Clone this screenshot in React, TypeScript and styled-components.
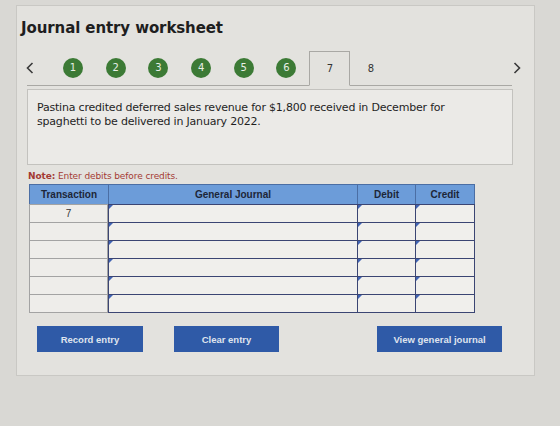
import styled, { createGlobalStyle } from "styled-components";

const GlobalStyle = createGlobalStyle`
  body {
    margin: 0;
    background: #d9d8d4;
    font-family: "DejaVu Sans", Verdana, sans-serif;
  }
`;

const STEPS = [1, 2, 3, 4, 5, 6];
const ROWS = 6;

const App = () => {
  return (
    <Page>
      <GlobalStyle />
      <Panel>
        <Title>Journal entry worksheet</Title>
        <NavRow>
          <StepStrip>
            <Arrow>
              <Chevron dir="left" />
            </Arrow>
            <Steps>
              {STEPS.map((n) => (
                <StepDot key={n}>{n}</StepDot>
              ))}
            </Steps>
            <Tab $active>7</Tab>
            <Tab>8</Tab>
          </StepStrip>
          <Arrow $next>
            <Chevron dir="right" />
          </Arrow>
        </NavRow>

        <Question>
          Pastina credited deferred sales revenue for $1,800 received in December for
          <br />
          spaghetti to be delivered in January 2022.
        </Question>

        <Note>
          <b>Note:</b> Enter debits before credits.
        </Note>

        <Grid>
          <HeadCell>Transaction</HeadCell>
          <HeadCell>General Journal</HeadCell>
          <HeadCell>Debit</HeadCell>
          <HeadCell>Credit</HeadCell>
          {Array.from({ length: ROWS }).map((_, i) => (
            <RowGroup key={i}>
              <TxCell>{i === 0 ? "7" : ""}</TxCell>
              <EntryCell />
              <EntryCell />
              <EntryCell />
            </RowGroup>
          ))}
        </Grid>

        <Buttons>
          <Btn $w={106}>Record entry</Btn>
          <Btn $w={105}>Clear entry</Btn>
          <Spacer />
          <Btn $w={125}>View general journal</Btn>
        </Buttons>
      </Panel>
    </Page>
  );
};

const Chevron = ({ dir }: { dir: "left" | "right" }) => (
  <svg width="8" height="12" viewBox="0 0 8 12">
    <path
      d={dir === "left" ? "M6.5 1 L1.5 6 L6.5 11" : "M1.5 1 L6.5 6 L1.5 11"}
      fill="none"
      stroke="#3a3a3a"
      strokeWidth="1.6"
    />
  </svg>
);

// page and outer frame
const Page = styled.div`
  padding: 5px 0 0 16px;
  height: 421px;
  box-sizing: border-box;
`;

const Panel = styled.div`
  width: 519px;
  height: 371px;
  box-sizing: border-box;
  border: 1px solid #c9c8c4;
  background: #e3e2de;
  padding: 0 0 0 10px;
`;

const Title = styled.h1`
  margin: 13px 0 0 -6px;
  font-size: 15px;
  font-weight: bold;
  color: #1e1e1e;
  letter-spacing: -0.1px;
`;

// step navigation
const NavRow = styled.div`
  display: flex;
  align-items: center;
  margin-top: 13px;
  width: 494px;
`;

const StepStrip = styled.div`
  display: flex;
  align-items: flex-end;
  width: 485px;
  height: 35px;
  border-bottom: 1px solid #a9a8a4;
`;

const Arrow = styled.div<{ $next?: boolean }>`
  display: flex;
  align-items: center;
  justify-content: center;
  width: 9px;
  height: 35px;
  margin-left: ${(p) => (p.$next ? "0" : "-2px")};
  margin-right: ${(p) => (p.$next ? "0" : "3px")};
`;

const Steps = styled.div`
  display: flex;
  align-items: center;
  gap: 22.7px;
  height: 35px;
  margin-left: 26px;
  margin-right: 13px;
`;

const StepDot = styled.div`
  width: 20px;
  height: 20px;
  border-radius: 50%;
  background: #3c7a35;
  color: #e8efe6;
  font-size: 10px;
  display: flex;
  align-items: center;
  justify-content: center;
`;

const Tab = styled.div<{ $active?: boolean }>`
  width: 41px;
  height: 35px;
  box-sizing: border-box;
  display: flex;
  align-items: center;
  justify-content: center;
  font-size: 10px;
  color: #333;
  margin-bottom: -1px;
  border: 1px solid ${(p) => (p.$active ? "#a9a8a4" : "transparent")};
  border-bottom: 1px solid ${(p) => (p.$active ? "#e3e2de" : "transparent")};
`;

// question box
const Question = styled.div`
  width: 486px;
  height: 76px;
  box-sizing: border-box;
  margin-top: 3px;
  border: 1px solid #c3c2be;
  background: #ebeae7;
  padding: 11px 9px;
  font-size: 11px;
  line-height: 14px;
  color: #1f1f1f;
  letter-spacing: -0.2px;
`;

const Note = styled.div`
  margin: 6px 0 0 1px;
  font-size: 9px;
  color: #a33a34;
  letter-spacing: -0.1px;

  b {
    font-weight: bold;
  }
`;

// journal grid
const Grid = styled.div`
  display: grid;
  grid-template-columns: 79px 249px 58px 59px;
  grid-auto-rows: 18px;
  grid-template-rows: 20px;
  margin: 3px 0 0 2px;
  width: 445px;
`;

const RowGroup = styled.div`
  display: contents;
`;

const HeadCell = styled.div`
  background: #6c9cd9;
  border: 1px solid #4b6ea4;
  margin: 0 -1px -1px 0;
  font-family: "Liberation Sans", Arial, sans-serif;
  font-size: 10px;
  font-weight: bold;
  color: #1d2638;
  display: flex;
  align-items: center;
  justify-content: center;
`;

const TxCell = styled.div`
  background: #eeedea;
  border: 1px solid #a3a3a3;
  margin: 0 0 -1px 0;
  font-family: "Liberation Sans", Arial, sans-serif;
  font-size: 10px;
  color: #333;
  display: flex;
  align-items: center;
  justify-content: center;
`;

const EntryCell = styled.div`
  position: relative;
  background: #f0efec;
  border: 1px solid #3b4573;
  margin: 0 -1px -1px 0;

  &::before {
    content: "";
    position: absolute;
    top: 0;
    left: 0;
    border-top: 4px solid #3f63b3;
    border-right: 4px solid transparent;
  }
`;

// action buttons
const Buttons = styled.div`
  display: flex;
  align-items: center;
  margin: 14px 0 0 10px;
  width: 465px;
  gap: 31px;
`;

const Spacer = styled.div`
  flex: 1;
`;

const Btn = styled.button<{ $w: number }>`
  width: ${(p) => p.$w}px;
  height: 26px;
  border: none;
  background: #2f5aa7;
  color: #dfe4ee;
  font-family: "Liberation Sans", Arial, sans-serif;
  font-size: 9.5px;
  font-weight: bold;
  padding: 0;
`;

export default App;
